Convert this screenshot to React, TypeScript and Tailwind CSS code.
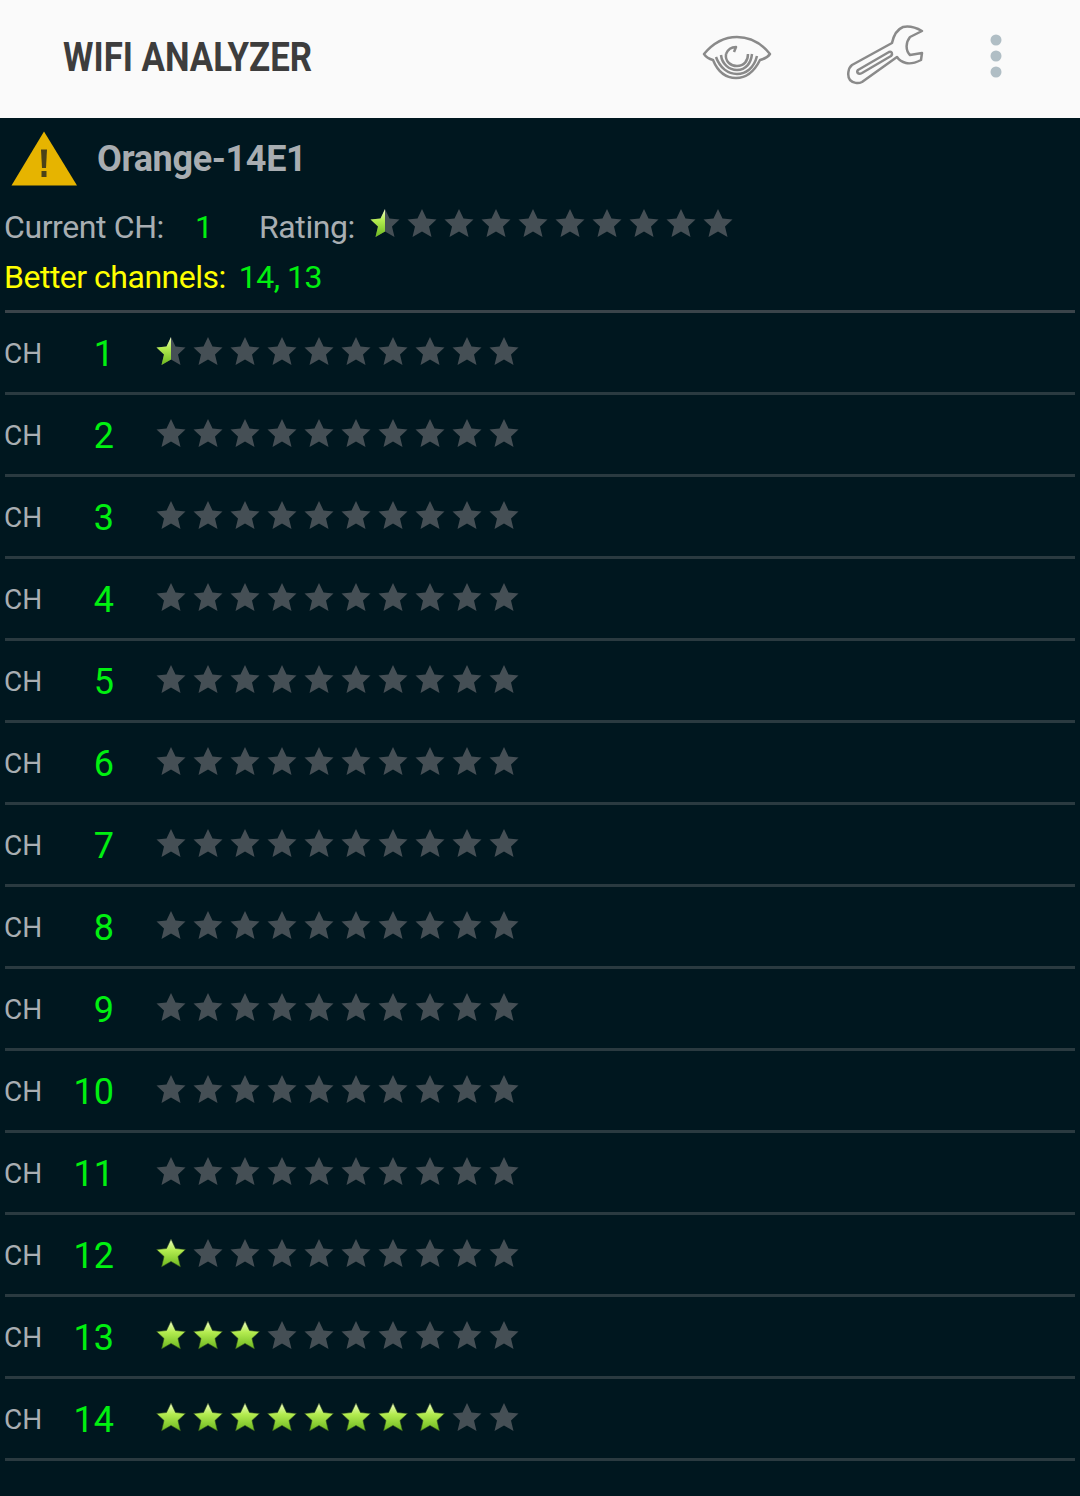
const channels = [
  { ch: 1, rating: 0.5 },
  { ch: 2, rating: 0 },
  { ch: 3, rating: 0 },
  { ch: 4, rating: 0 },
  { ch: 5, rating: 0 },
  { ch: 6, rating: 0 },
  { ch: 7, rating: 0 },
  { ch: 8, rating: 0 },
  { ch: 9, rating: 0 },
  { ch: 10, rating: 0 },
  { ch: 11, rating: 0 },
  { ch: 12, rating: 1 },
  { ch: 13, rating: 3 },
  { ch: 14, rating: 8 },
]

const STAR = "15,0 19.5,9.5 29.5,10.5 22,17.5 24.5,28 15,22.5 5.5,28 8,17.5 0.5,10.5 10.5,9.5"

function Star({ fill }: { fill: number }) {
  return (
    <svg width="30" height="30" viewBox="0 0 30 30" className="block shrink-0">
      <polygon points={STAR} fill="#454f55" />
      {fill === 1 && <polygon points={STAR} fill="url(#starGreen)" stroke="#1c3d12" strokeWidth="0.6" />}
      {fill === 0.5 && <polygon points={STAR} fill="url(#starGreen)" clipPath="url(#starHalf)" />}
    </svg>
  )
}

function Stars({ rating }: { rating: number }) {
  return (
    <div className="flex gap-[7px]">
      {Array.from({ length: 10 }).map((_, i) => (
        <Star key={i} fill={rating >= i + 1 ? 1 : rating > i ? 0.5 : 0} />
      ))}
    </div>
  )
}

export default function App() {
  return (
    <div className="w-[1080px] h-[1496px] overflow-hidden bg-[#00171f] font-['Roboto',sans-serif]">
      <svg width="0" height="0" className="absolute">
        <defs>
          <linearGradient id="starGreen" x1="0" y1="0" x2="0" y2="1">
            <stop offset="0" stopColor="#f0fbc8" />
            <stop offset="0.4" stopColor="#b4ec50" />
            <stop offset="1" stopColor="#6cb81f" />
          </linearGradient>
          <clipPath id="starHalf">
            <polygon points="0,0 15,0 15,30 0,30" />
          </clipPath>
        </defs>
      </svg>

      <header className="h-[118px] bg-[#fafafa] flex items-center pl-[63px]">
        <span className="text-[40px] font-bold text-[#3d3d3d] inline-block origin-left scale-x-[0.87] whitespace-nowrap mt-[-2px]">
          WIFI ANALYZER
        </span>
        <svg width="74" height="48" viewBox="700 33 74 48" className="ml-auto mt-[-4px]" fill="#fafafa" stroke="#8a8a8a" strokeWidth="2.5" strokeLinejoin="round">
          <path d="M704 54 C714 42 726 37 737 37 C749 37 761 43 770 54 C768 57 764 59 760 60 C754 72 746 78 736 78 C726 78 718 72 713 60 C709 59 706 57 704 54 Z" />
          <path d="M716 57 C720 68 728 74 737 74 C746 74 754 68 757 56" fill="none" />
          <path d="M721 55 C722 64 729 70 737 70 C746 70 751 63 752 54" fill="none" />
          <path d="M726 54 C725 62 731 66 737 66 C744 66 748 61 748 54" fill="none" />
          <path d="M726 54 C728 49 732 47 736 47 L734 52" fill="none" />
        </svg>
        <svg width="80" height="62" viewBox="845 24 80 62" className="ml-[71px] mt-[-8px]" fill="#fafafa" stroke="#8a8a8a" strokeWidth="2.5" strokeLinejoin="round">
          <path d="M852 65 L892 43 C894 34 898 29 903 27 C908 26 915 27 922 31 L910 37 C906 42 905 50 910 55 L922 53 L921 60 C915 63 910 64 906 63 C902 62 899 60 897 57 L862 82 C858 84 853 83 850 80 C847 76 848 68 852 65 Z" />
          <path d="M858 70 L889 52 C892 51 893 54 891 56 L862 73 C858 75 856 72 858 70 Z" />
        </svg>
        <svg width="14" height="44" viewBox="0 0 14 44" className="ml-[64px] mr-[77px] mt-[-6px]" fill="#b0bec5">
          <circle cx="7" cy="6" r="5.5" />
          <circle cx="7" cy="22" r="5.5" />
          <circle cx="7" cy="38" r="5.5" />
        </svg>
      </header>

      <section className="h-[192px] flex flex-col pl-[4px]">
        <div className="flex items-center h-[86px]">
          <svg width="66" height="55" viewBox="0 0 66 55" className="ml-[7px] mt-[-5px]">
            <polygon points="33,0.5 66,54.5 0.5,54.5" fill="#e6b400" />
            <polygon points="30,18.5 36,18.5 35,37 31,37" fill="#4a4218" />
            <rect x="30.5" y="40" width="5" height="6" fill="#4a4218" />
          </svg>
          <span className="ml-[20px] text-[36px] font-bold text-[#a8adb1] mt-[-5px] tracking-[-0.36px]">Orange-14E1</span>
        </div>
        <div className="flex items-center h-[46px] text-[32px] text-[#a8aeb2] tracking-[-0.4px]">
          <span className="w-[191px]">Current CH:</span>
          <span className="w-[64px] text-[#00f010]">1</span>
          <span className="w-[111px]">Rating:</span>
          <div className="mt-[-7px]">
            <Stars rating={0.5} />
          </div>
        </div>
        <div className="flex items-center h-[54px] text-[32px] text-[#00f010] tracking-[-0.5px]">
          <span className="text-[#ffff00] mr-[13px]">Better channels:</span>
          14, 13
        </div>
      </section>

      <div className="h-[3px] mx-[5px] bg-[#3a444a]" />

      <div>
        {channels.map((c) => (
          <div key={c.ch} className="h-[82px] mx-[5px] border-b-[3px] border-[#2a3a40] flex items-center">
            <div className="w-[109px] flex items-center justify-between pt-[3px]">
              <span className="text-[28px] text-[#a8aeb2] ml-[-1px]">CH</span>
              <span className="text-[36px] text-[#00f010]">{c.ch}</span>
            </div>
            <div className="ml-[42px] mt-[-1px]">
              <Stars rating={c.rating} />
            </div>
          </div>
        ))}
      </div>
    </div>
  )
}
